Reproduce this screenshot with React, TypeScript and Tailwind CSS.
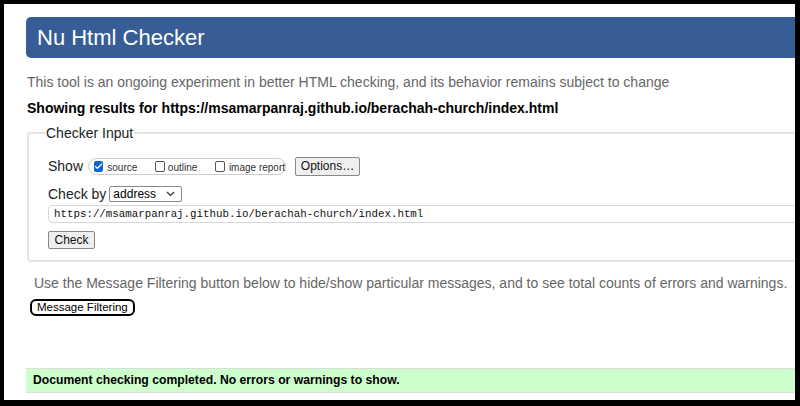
import { Check } from "lucide-react";

const url = "https://msamarpanraj.github.io/berachah-church/index.html";

export default function App() {
  return (
    <div className="h-[406px] w-[800px] bg-black pt-[4px] pl-[4px] font-['Liberation_Sans',Arial,sans-serif]">
      <div className="h-[396px] w-[791px] overflow-hidden bg-white pt-[13px] pl-[22px]">
        <div className="w-[900px]">
          <h1 className="flex h-[41px] items-center rounded-l-[5px] bg-[#365d95] pl-[11px] text-[22px] leading-none text-white">
            Nu Html Checker
          </h1>
          <p className="mt-[15px] pl-[1px] text-[14px] leading-[18px] text-[#666]">
            This tool is an ongoing experiment in better HTML checking, and its behavior remains subject to change
          </p>
          <p className="mt-[8px] pl-[1px] text-[14px] font-bold leading-[18px] text-black">
            Showing results for {url}
          </p>

          <fieldset className="mt-[7px] ml-[1px] rounded-l-[4px] border-2 border-[#e4e4e4] pb-[11px] pl-[19px]">
            <legend className="ml-[-3px] px-[1px] text-[14px] leading-[18px] text-[#222]">Checker Input</legend>
            <div className="mt-[14px] flex h-[20px] items-center">
              <span className="text-[14px] leading-[18px] text-[#222]">Show</span>
              <div className="ml-[5px] flex h-[17px] w-[198px] items-center whitespace-nowrap rounded-full border border-[#ccc] pl-[5px] text-[10px] leading-none text-[#333]">
                <span className="mr-[4px] flex h-[11px] w-[11px] items-center justify-center rounded-[2px] bg-[#0b69d6]">
                  <Check size={9} strokeWidth={3.5} color="white" />
                </span>
                <span className="pt-[3px]">source</span>
                <span className="ml-[18px] mr-[3px] h-[11px] w-[11px] rounded-[2px] border border-[#555]" />
                <span className="pt-[3px]">outline</span>
                <span className="ml-[18px] mr-[4px] h-[11px] w-[11px] rounded-[2px] border border-[#555]" />
                <span className="pt-[3px]">image report</span>
              </div>
              <button className="ml-[9px] h-[19px] w-[65px] rounded-[2px] border border-[#888] bg-[#efefef] text-[12px] leading-none text-[#111]">
                Options…
              </button>
            </div>
            <div className="mt-[9px] flex h-[18px] items-center">
              <span className="text-[14px] leading-[18px] text-[#222]">Check by</span>
              <div className="ml-[3px] flex h-[16px] w-[73px] items-center justify-between rounded-[2px] border border-[#888] pl-[3px] pr-[6px] text-[12px] leading-none text-black">
                address
                <svg width="9" height="6" viewBox="0 0 9 6">
                  <path d="M1 1l3.5 3.5L8 1" fill="none" stroke="#333" strokeWidth="1.2" />
                </svg>
              </div>
            </div>
            <div className="mt-[2px] flex h-[18px] items-center rounded-l-[4px] border border-[#d8d8d8] pl-[5px] font-['Liberation_Mono',monospace] text-[10.8px] leading-none text-[#111]">
              {url}
            </div>
            <button className="mt-[8px] block h-[18px] w-[47px] rounded-[2px] border border-[#888] bg-[#efefef] text-[12px] leading-none text-[#111]">
              Check
            </button>
          </fieldset>

          <p className="mt-[12px] pl-[8px] text-[14px] leading-[18px] text-[#666]">
            Use the Message Filtering button below to hide/show particular messages, and to see total counts of errors and warnings.
          </p>
          <button className="mt-[7px] ml-[4px] h-[17px] rounded-[6px] border-2 border-black px-[5px] text-[11.5px] leading-none text-black">
            Message Filtering
          </button>

          <div className="mt-[50px] flex h-[25px] items-center border-y border-[#ddd] bg-[#ccffcc] pl-[7px] text-[12.2px] font-bold leading-none text-black">
            Document checking completed. No errors or warnings to show.
          </div>
        </div>
      </div>
    </div>
  );
}
